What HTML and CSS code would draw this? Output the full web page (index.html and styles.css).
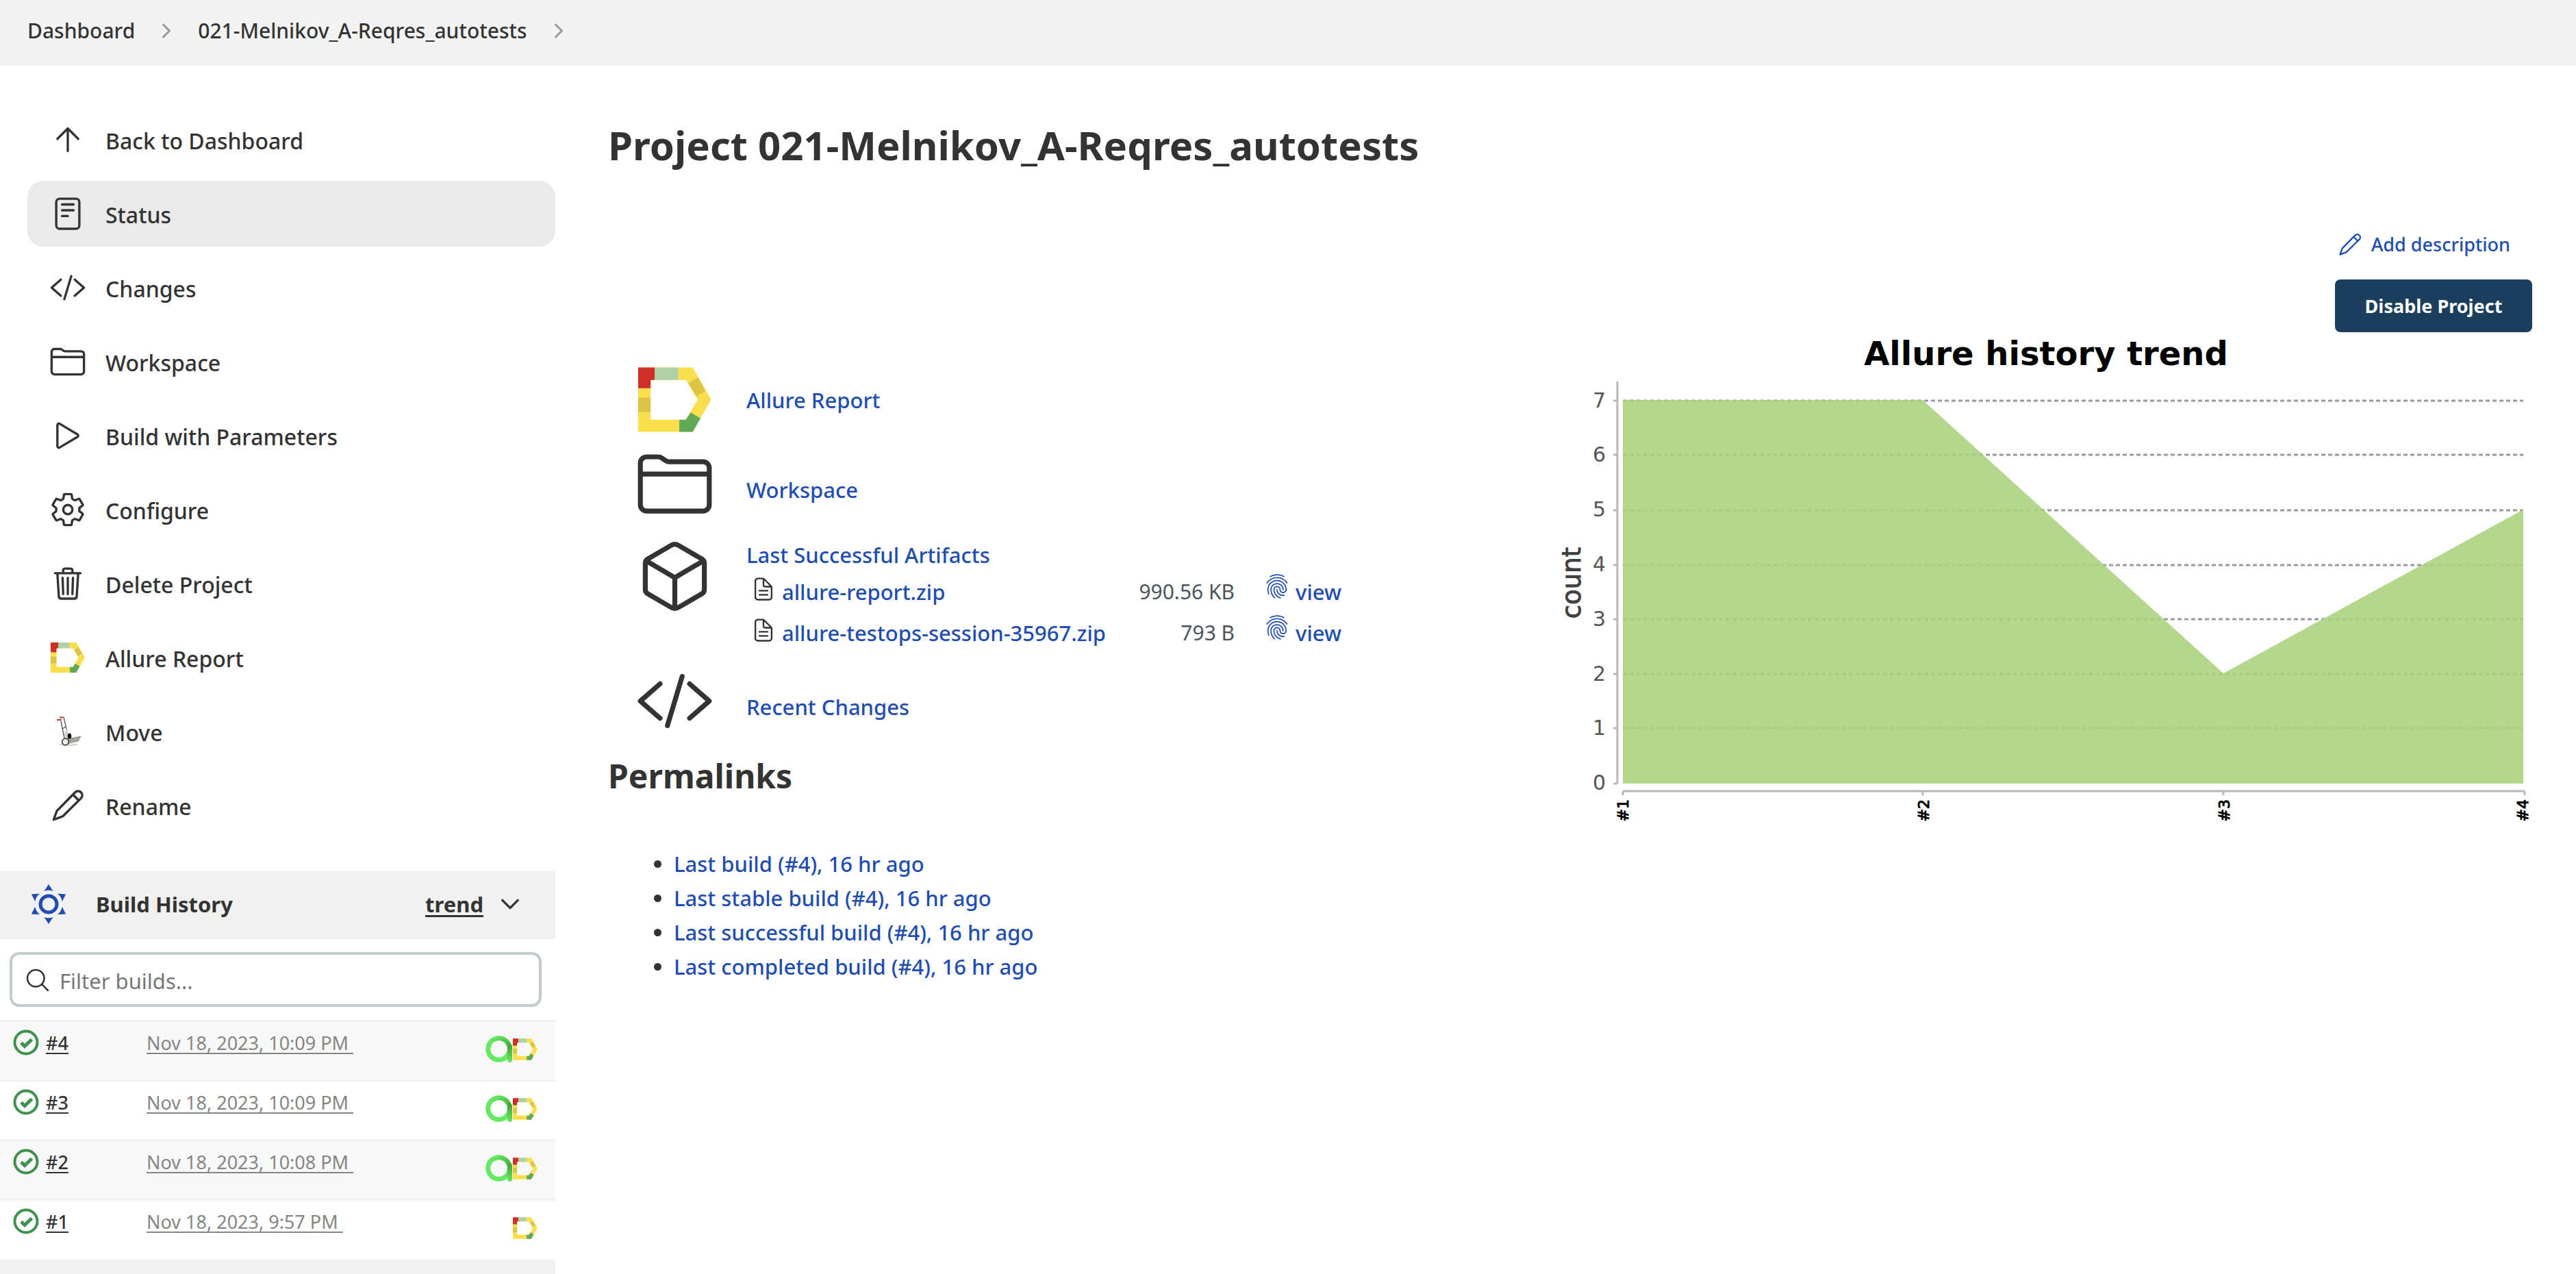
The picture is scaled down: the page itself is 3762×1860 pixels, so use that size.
FILE: index.html
```
<!DOCTYPE html>
<html lang="en">
<head>
<meta charset="utf-8">
<title>021-Melnikov_A-Reqres_autotests</title>
<link rel="stylesheet" href="styles.css">
</head>
<body>
<svg class="sprite" aria-hidden="true">
  <defs>
    <linearGradient id="stem-shade" x1="0" y1="0" x2="0" y2="1">
      <stop offset="0" stop-color="#3f9f3c"/><stop offset="1" stop-color="#68e862"/>
    </linearGradient>
    <linearGradient id="arc-shade" x1="0" y1="0" x2="1" y2="1">
      <stop offset="0" stop-color="#68e862"/><stop offset="1" stop-color="#43a53f"/>
    </linearGradient>
  </defs>
  <symbol id="chevron-right" viewBox="0 0 512 512"><path d="M184 112l144 144-144 144"/></symbol>
  <symbol id="chevron-down" viewBox="0 0 512 512"><path d="M112 184l144 144 144-144"/></symbol>
  <symbol id="arrow-up" viewBox="0 0 512 512"><path d="M112 244l144-144 144 144M256 120v292"/></symbol>
  <symbol id="reader" viewBox="0 0 512 512"><rect x="96" y="48" width="320" height="416" rx="48"/><path d="M176 128h160M176 208h160M176 288h80"/></symbol>
  <symbol id="code" viewBox="0 0 512 512"><path d="M160 368L32 256l128-112M352 368l128-112-128-112M304 96l-96 320"/></symbol>
  <symbol id="folder" viewBox="0 0 512 512"><path d="M440 432H72a40 40 0 01-40-40V120a40 40 0 0140-40h75.89a40 40 0 0122.19 6.72l27.84 18.56a40 40 0 0022.19 6.72H440a40 40 0 0140 40v240a40 40 0 01-40 40zM32 192h448"/></symbol>
  <symbol id="play" viewBox="0 0 512 512"><path d="M112 111v290c0 17.44 17 28.52 31 20.16l247.9-148.37c12.12-7.25 12.12-26.33 0-33.58L143 90.84c-14-8.36-31 2.72-31 20.16z"/></symbol>
  <symbol id="settings" viewBox="0 0 512 512"><path d="M262.29 192.31a64 64 0 1057.4 57.4 64.13 64.13 0 00-57.4-57.4zM416.39 256a154.34 154.34 0 01-1.53 20.79l45.21 35.46a10.81 10.81 0 012.45 13.75l-42.77 74a10.81 10.81 0 01-13.14 4.59l-44.9-18.08a16.11 16.11 0 00-15.17 1.75A164.48 164.48 0 01325 400.8a15.94 15.94 0 00-8.82 12.14l-6.73 47.89a11.08 11.08 0 01-10.68 9.17h-85.54a11.11 11.11 0 01-10.69-8.87l-6.72-47.82a16.07 16.07 0 00-9-12.22 155.3 155.3 0 01-21.46-12.57 16 16 0 00-15.11-1.71l-44.89 18.07a10.81 10.81 0 01-13.14-4.58l-42.77-74a10.8 10.8 0 012.45-13.75l38.21-30a16.05 16.05 0 006-14.08c-.36-4.17-.58-8.33-.58-12.5s.21-8.27.58-12.35a16 16 0 00-6.07-13.94l-38.19-30A10.81 10.81 0 0149.48 186l42.77-74a10.81 10.81 0 0113.14-4.59l44.9 18.08a16.11 16.11 0 0015.17-1.75A164.48 164.48 0 01187 111.2a15.94 15.94 0 008.82-12.14l6.73-47.89A11.08 11.08 0 01213.23 42h85.54a11.11 11.11 0 0110.69 8.87l6.72 47.82a16.07 16.07 0 009 12.22 155.3 155.3 0 0121.46 12.57 16 16 0 0015.11 1.71l44.89-18.07a10.81 10.81 0 0113.14 4.58l42.77 74a10.8 10.8 0 01-2.45 13.75l-38.21 30a16.05 16.05 0 00-6.05 14.08c.33 4.14.55 8.3.55 12.47z"/></symbol>
  <symbol id="trash" viewBox="0 0 512 512"><path d="M112 112l20 320c.95 18.49 14.4 32 32 32h184c17.67 0 30.87-13.51 32-32l20-320M80 112h352M192 112V72a24 24 0 0124-24h80a24 24 0 0124 24v40M256 176v224M184 176l8 224M328 176l-8 224"/></symbol>
  <symbol id="pencil" viewBox="0 0 512 512"><path d="M106 329L358 73a58 58 0 0182 82L184 407 60 452zM327 104l81 83"/></symbol>
  <symbol id="cube" viewBox="0 0 512 512"><path d="M448 341.37V170.61A32 32 0 00432.11 143l-152-88.46a47.94 47.94 0 00-48.24 0L79.89 143A32 32 0 0064 170.61v170.76A32 32 0 0079.89 369l152 88.46a48 48 0 0048.24 0l152-88.46A32 32 0 00448 341.37zM69 154l187 110 187-110M256 464V264"/></symbol>
  <symbol id="document" viewBox="0 0 512 512"><path d="M416 221.25V416a48 48 0 01-48 48H144a48 48 0 01-48-48V96a48 48 0 0148-48h98.75a32 32 0 0122.62 9.37l141.26 141.26a32 32 0 019.37 22.62zM256 56v120a32 32 0 0032 32h120M176 288h160M176 368h160"/></symbol>
  <symbol id="search" viewBox="0 0 512 512"><path d="M221.09 64a157.09 157.09 0 10157.09 157.09A157.1 157.1 0 00221.09 64zM338.29 338.29L448 448"/></symbol>
  <symbol id="fingerprint" viewBox="0 0 512 512"><path d="M390.42 75.28a10.45 10.45 0 01-5.32-1.44C340.72 50.08 302.35 40 256.35 40c-45.77 0-89.23 11.28-128.76 33.84C122 77 115.11 74.8 111.87 69a12.4 12.4 0 014.63-16.32A281.81 281.81 0 01256.35 16c49.23 0 92.23 11.28 139.39 36.48a12 12 0 014.85 16.08 11.3 11.3 0 01-10.17 6.72zm-330.79 126a11.73 11.73 0 01-6.7-2.16 12.26 12.26 0 01-2.78-16.8c22.89-33.6 52-60 86.69-78.48 72.58-38.84 165.51-39.12 238.32-.24 34.68 18.48 63.8 44.64 86.69 78a12.29 12.29 0 01-2.78 16.8 11.26 11.26 0 01-16.18-2.88c-20.8-30.24-47.15-54-78.36-70.56-66.34-35.28-151.18-35.28-217.29.24-31.44 16.8-57.79 40.8-78.59 71a10 10 0 01-9.02 5.08zM204.1 491a10.66 10.66 0 01-8.09-3.6C175.9 466.48 165 453 149.55 424c-16-29.52-24.27-65.52-24.27-104.16 0-71.28 58.71-129.36 130.84-129.36S387 248.56 387 319.84a11.56 11.56 0 11-23.11 0c0-58.08-48.32-105.36-107.72-105.36S148.4 261.76 148.4 319.84c0 34.56 7.39 66.48 21.49 92.4 14.8 27.6 25 39.36 42.77 58.08a12.67 12.67 0 010 17 12.44 12.44 0 01-8.56 3.68zm165.75-44.4c-27.51 0-51.78-7.2-71.66-21.36a129.1 129.1 0 01-55-105.36 11.57 11.57 0 1123.12 0 104.28 104.28 0 0044.84 85.44c16.41 11.52 35.6 17 58.72 17a147.41 147.41 0 0024-2.4c6.24-1.2 12.25 3.12 13.4 9.84a11.92 11.92 0 01-9.47 13.92 152.28 152.28 0 01-27.95 2.88zM323.38 496a13 13 0 01-3-.48c-36.76-10.56-60.8-24.72-86-50.4-32.37-33.36-50.16-77.76-50.16-125.28 0-38.88 31.9-70.56 71.19-70.56s71.2 31.68 71.2 70.56c0 25.68 21.5 46.56 48.08 46.56s48.08-20.88 48.08-46.56c0-90.48-75.13-163.92-167.59-163.92-65.65 0-125.75 37.92-152.79 96.72-9 19.44-13.64 42.24-13.64 67.2 0 18.72 1.61 48.24 15.48 86.64 2.32 6.24-.69 13.2-6.7 15.36a11.34 11.34 0 01-14.79-7 276.39 276.39 0 01-16.88-95c0-28.8 5.32-55 15.72-77.76 30.75-67 98.94-110.4 173.6-110.4 105.18 0 190.71 84.24 190.71 187.92 0 38.88-31.9 70.56-71.2 70.56s-71.2-31.68-71.2-70.56C303.5 293.92 282 273 255.42 273s-48.08 20.88-48.08 46.56c0 41 15.26 79.44 43.23 108.48 22 22.56 43 35 75.59 44.16 6.24 1.68 9.71 8.4 8.09 14.64a11.4 11.4 0 01-10.87 9.16z"/></symbol>
  <symbol id="allure" viewBox="0 0 106 93">
    <path fill="#f9df4c" fill-rule="evenodd" d="M0 0h79l26.5 46.5L79 93H0zM18 18v57.5h51l17-29L69 18z"/>
    <path fill="#d02f28" d="M0 0h24v18h-6v12H0z"/>
    <path fill="#afd1a9" d="M24 0h34v18H24z"/>
    <path fill="#dcc445" d="M0 43.500h18v21H0zM87 14.500l10.500 19.500L84 41.500l-11.500-19z"/>
    <path fill="#60a957" d="M59.500 75.500H69l7-10.500 14 8.500L79 93H59.500z"/>
  </symbol>
  <symbol id="testops" viewBox="0 0 40 40">
    <circle cx="19.500" cy="19.500" r="15.800" fill="none" stroke="#67e862" stroke-width="7"/>
    <path d="M11 6.500C20 .5 33 5 35.300 17" fill="none" stroke="url(#arc-shade)" stroke-width="6"/>
    <path d="M32 17q3.500-8 6.500-3l.5 3v18.500a3.500 3.500 0 01-7 0z" fill="url(#stem-shade)"/>
  </symbol>
  <symbol id="hand-truck" viewBox="0 0 54 54">
    <ellipse cx="28" cy="46" rx="14" ry="2.500" fill="#ddd"/>
    <path d="M17 12l5 25M21.500 8l5 22M19.500 23l4-3" fill="none" stroke="#555" stroke-width="1.300"/>
    <path d="M24.500 22l4 10v8h-6l-1-9z" fill="#d5d5d0"/>
    <ellipse cx="29.500" cy="34" rx="2.800" ry="4.500" fill="#111"/>
    <path d="M27 38l19-4-4 7-16 3z" fill="#a3a69f" stroke="#777" stroke-width=".8"/>
    <path d="M11 10h7M15 6.500h7" fill="none" stroke="#b8403c" stroke-width="2.200"/>
    <circle cx="23.500" cy="42" r="4.800" fill="#eee" stroke="#111" stroke-width="1.300"/>
  </symbol>
  <symbol id="weather" viewBox="0 0 60 60">
    <circle cx="30" cy="30" r="12" fill="none" stroke="#1f4db1" stroke-width="5"/>
    <g fill="#1f4db1">
      <path id="ray" d="M30 1l6.500 10Q30 8.500 23.500 11z"/>
      <use href="#ray" transform="rotate(60 30 30)"/><use href="#ray" transform="rotate(120 30 30)"/>
      <use href="#ray" transform="rotate(180 30 30)"/><use href="#ray" transform="rotate(240 30 30)"/>
      <use href="#ray" transform="rotate(300 30 30)"/>
    </g>
  </symbol>
  <symbol id="success" viewBox="0 0 38 38">
    <circle cx="19" cy="19" r="16.500" fill="none" stroke="#3f9150" stroke-width="4"/>
    <path d="M12 19.500l5 5L27.500 14.500" fill="none" stroke="#3f9150" stroke-width="5"/>
  </symbol>
</svg>

<nav class="breadcrumbs" aria-label="Breadcrumb">
  <a href="#">Dashboard</a>
  <svg class="icon crumb-sep"><use href="#chevron-right"/></svg>
  <a href="#">021-Melnikov_A-Reqres_autotests</a>
  <svg class="icon crumb-sep"><use href="#chevron-right"/></svg>
</nav>

<div class="page">
  <aside class="side">
    <nav class="tasks" aria-label="Project">
      <a class="task" href="#"><svg class="icon"><use href="#arrow-up"/></svg><span>Back to Dashboard</span></a>
      <a class="task active" href="#" aria-current="page"><svg class="icon"><use href="#reader"/></svg><span>Status</span></a>
      <a class="task" href="#"><svg class="icon"><use href="#code"/></svg><span>Changes</span></a>
      <a class="task" href="#"><svg class="icon"><use href="#folder"/></svg><span>Workspace</span></a>
      <a class="task" href="#"><svg class="icon"><use href="#play"/></svg><span>Build with Parameters</span></a>
      <a class="task" href="#"><svg class="icon"><use href="#settings"/></svg><span>Configure</span></a>
      <a class="task" href="#"><svg class="icon"><use href="#trash"/></svg><span>Delete Project</span></a>
      <a class="task" href="#"><svg class="logo"><use href="#allure"/></svg><span>Allure Report</span></a>
      <a class="task" href="#"><svg class="logo truck"><use href="#hand-truck"/></svg><span>Move</span></a>
      <a class="task" href="#"><svg class="icon"><use href="#pencil"/></svg><span>Rename</span></a>
    </nav>

    <section class="history">
      <header class="history-head">
        <svg class="history-icon"><use href="#weather"/></svg>
        <h2>Build History</h2>
        <a class="trend" href="#">trend</a>
        <button class="collapse" type="button" aria-label="Collapse"><svg class="icon"><use href="#chevron-down"/></svg></button>
      </header>
      <label class="filter">
        <svg class="icon"><use href="#search"/></svg>
        <input type="text" placeholder="Filter builds..." aria-label="Filter builds">
      </label>
      <table class="builds">
        <tr>
          <td class="build"><a href="#"><svg class="status"><use href="#success"/></svg></a><a class="num" href="#">#4</a></td>
          <td class="date"><a href="#">Nov 18, 2023, 10:09 PM&nbsp;</a></td>
          <td class="badges"><svg class="testops"><use href="#testops"/></svg><svg class="allure"><use href="#allure"/></svg></td>
        </tr>
        <tr>
          <td class="build"><a href="#"><svg class="status"><use href="#success"/></svg></a><a class="num" href="#">#3</a></td>
          <td class="date"><a href="#">Nov 18, 2023, 10:09 PM&nbsp;</a></td>
          <td class="badges"><svg class="testops"><use href="#testops"/></svg><svg class="allure"><use href="#allure"/></svg></td>
        </tr>
        <tr>
          <td class="build"><a href="#"><svg class="status"><use href="#success"/></svg></a><a class="num" href="#">#2</a></td>
          <td class="date"><a href="#">Nov 18, 2023, 10:08 PM&nbsp;</a></td>
          <td class="badges"><svg class="testops"><use href="#testops"/></svg><svg class="allure"><use href="#allure"/></svg></td>
        </tr>
        <tr>
          <td class="build"><a href="#"><svg class="status"><use href="#success"/></svg></a><a class="num" href="#">#1</a></td>
          <td class="date"><a href="#">Nov 18, 2023, 9:57 PM&nbsp;</a></td>
          <td class="badges"><svg class="allure"><use href="#allure"/></svg></td>
        </tr>
      </table>
      <div class="history-foot"></div>
    </section>
  </aside>

  <main class="main">
    <h1>Project 021-Melnikov_A-Reqres_autotests</h1>
    <div class="actions">
      <a class="describe" href="#"><svg class="icon"><use href="#pencil"/></svg>Add description</a>
      <button class="disable" type="button">Disable Project</button>
    </div>
    <div class="content">
      <div class="summary">
        <div class="item report"><svg class="logo"><use href="#allure"/></svg><a href="#">Allure Report</a></div>
        <div class="item workspace"><svg class="icon"><use href="#folder"/></svg><a class="single" href="#">Workspace</a></div>
        <div class="item artifacts">
          <svg class="icon"><use href="#cube"/></svg>
          <div>
            <a class="artifacts-title" href="#">Last Successful Artifacts</a>
            <table class="files">
              <tr>
                <td><a href="#"><svg class="icon"><use href="#document"/></svg>allure-report.zip</a></td>
                <td class="size">990.56 KB</td>
                <td><a href="#"><svg class="print"><use href="#fingerprint"/></svg>view</a></td>
              </tr>
              <tr>
                <td><a href="#"><svg class="icon"><use href="#document"/></svg>allure-testops-session-35967.zip</a></td>
                <td class="size">793 B</td>
                <td><a href="#"><svg class="print"><use href="#fingerprint"/></svg>view</a></td>
              </tr>
            </table>
          </div>
        </div>
        <div class="item"><svg class="icon"><use href="#code"/></svg><a class="single" href="#">Recent Changes</a></div>

        <h2>Permalinks</h2>
        <ul class="permalinks">
          <li><a href="#">Last build (#4), 16 hr ago</a></li>
          <li><a href="#">Last stable build (#4), 16 hr ago</a></li>
          <li><a href="#">Last successful build (#4), 16 hr ago</a></li>
          <li><a href="#">Last completed build (#4), 16 hr ago</a></li>
        </ul>
      </div>

      <svg class="chart" viewBox="0 0 1440 740" role="img" aria-label="Allure history trend">
        <text class="chart-title" x="730" y="48">Allure history trend</text>
        <g class="grid">
          <path d="M112 100H1427M112 179H1427M112 260H1427M112 340H1427M112 419H1427M112 499H1427M112 578H1427"/>
        </g>
        <path class="area" d="M112 99H550L989 498l438-239V659H112z"/>
        <path class="axis" d="M104 72V659M112 670H1429M98 100h6M98 179h6M98 260h6M98 340h6M98 419h6M98 499h6M98 578h6M98 659h6M112 670v6M550 670v6M989 670v6M1429 670v6"/>
        <g class="ticks">
          <text x="87" y="110">7</text><text x="87" y="189">6</text><text x="87" y="269">5</text><text x="87" y="349">4</text>
          <text x="87" y="429">3</text><text x="87" y="509">2</text><text x="87" y="588">1</text><text x="87" y="668">0</text>
        </g>
        <text class="y-label" transform="translate(50 366) rotate(-90)">count</text>
        <g class="builds-axis">
          <text transform="translate(120 682) rotate(-90)">#1</text><text transform="translate(559 682) rotate(-90)">#2</text>
          <text transform="translate(998 682) rotate(-90)">#3</text><text transform="translate(1434 682) rotate(-90)">#4</text>
        </g>
      </svg>
    </div>
  </main>
</div>
</body>
</html>
```
FILE: styles.css
```
* { box-sizing: border-box; }

body {
  margin: 0;
  background: #fff;
  color: #333;
  font: 500 31px/48px "Noto Sans", "Open Sans", sans-serif;
}

a { color: #1f4db1; text-decoration: none; }
h1, h2 { margin: 0; font-weight: 700; }
button { font-family: inherit; border: 0; cursor: pointer; }
svg { display: block; flex: none; }
.sprite { position: absolute; width: 0; height: 0; }

.icon {
  fill: none;
  stroke: currentColor;
  stroke-width: 32px;
  stroke-linecap: round;
  stroke-linejoin: round;
}

/* Breadcrumbs */
.breadcrumbs {
  display: flex;
  align-items: center;
  gap: 30px;
  height: 96px;
  padding: 0 40px 6px;
  background: #f3f3f3;
  font-size: 30px;
}
.breadcrumbs a { color: #333; }
.crumb-sep { width: 32px; height: 32px; color: #999; stroke-width: 48px; }

.page { display: flex; align-items: flex-start; }

/* Sidebar */
.side { flex: none; width: 811px; }
.tasks {
  display: flex;
  flex-direction: column;
  gap: 12px;
  padding: 60px 0 47px 40px;
}
.task {
  display: flex;
  align-items: center;
  gap: 28px;
  height: 96px;
  padding-left: 32px;
  border-radius: 24px;
  color: #333;
  font-size: 32px;
}
.task.active { background: #eaeaea; }
.task svg { width: 54px; height: 54px; }
.task span { padding-top: 3px; }
.task .logo { height: 44px; }
.task .truck { height: 54px; }

.history-head {
  display: flex;
  align-items: center;
  height: 100px;
  padding: 0 46px 2px 41px;
  background: #f1f1f1;
}
.history-head h2 { flex: 1; padding-left: 39px; font-size: 31px; line-height: 48px; }
.history-icon { width: 60px; height: 60px; }
.trend {
  color: #333;
  font-weight: 700;
  text-decoration: underline;
  text-decoration-skip-ink: none;
  text-decoration-thickness: 3px;
  text-underline-offset: 4px;
}
.collapse { margin-left: 19px; padding: 0; background: none; color: #333; }
.collapse svg { width: 40px; height: 40px; stroke-width: 44px; }

.filter {
  display: flex;
  align-items: center;
  gap: 12px;
  height: 80px;
  margin: 19px 20px 19px 14px;
  padding: 1px 20px 0 17px;
  border: 4px solid #c4cbcf;
  border-radius: 14px;
}
.filter svg { width: 40px; height: 40px; }
.filter input {
  flex: 1;
  min-width: 0;
  padding: 2px 0 0;
  border: 0;
  outline: 0;
  background: none;
  color: #333;
  font: 400 31px/48px "Noto Sans", "Open Sans", sans-serif;
}
.filter input::placeholder { color: #777; opacity: 1; }

.builds { width: 100%; border-collapse: collapse; font-size: 27px; line-height: 40px; }
.builds tr { height: 87px; border-top: 3px solid #f1f1f1; }
.builds tr:nth-child(odd) { background: #f8f8f8; }
.builds td { padding: 11px 0 0; vertical-align: top; }
.builds .build { width: 214px; padding-left: 18px; }
.build a { display: inline-block; vertical-align: top; }
.build .status { width: 40px; height: 38px; }
.num { padding-left: 9px; color: #333; text-decoration: underline; text-decoration-thickness: 2px; text-underline-offset: 4px; }
.date a { color: #858585; font-weight: 400; text-decoration: underline; text-decoration-thickness: 2px; text-underline-offset: 4px; }
.builds .badges { display: flex; justify-content: flex-end; align-items: center; padding: 20px 26px 0 0; }
.testops { width: 40px; height: 40px; }
.allure { width: 36px; height: 40px; }
.history-foot { height: 24px; background: #f1f1f1; }

/* Main panel */
.main { flex: 1; min-width: 0; padding: 76px 64px 0 77px; }
h1 { font-size: 58px; line-height: 80px; }
.actions {
  display: flex;
  flex-direction: column;
  align-items: flex-end;
  gap: 27px;
  padding-top: 81px;
}
.describe { display: flex; align-items: center; gap: 12px; padding-right: 32px; font-size: 27px; }
.describe svg { width: 38px; height: 38px; }
.disable {
  width: 288px;
  height: 77px;
  border-radius: 8px;
  background: #1b3e5d;
  color: #fff;
  font-size: 27px;
  font-weight: 700;
}

.content { display: flex; align-items: flex-start; justify-content: space-between; }
.summary { padding-top: 41px; }
.item { display: flex; align-items: flex-start; gap: 47px; padding-left: 40px; }
.item > svg { width: 115px; height: 115px; color: #333; }
.item > .logo { padding: 0 4px; }
.item.report { align-items: center; margin-bottom: 8px; }
.workspace { margin-bottom: 20px; }
.artifacts { margin-bottom: 12px; }
.single { padding-top: 42px; }
.artifacts-title { display: block; padding-top: 2px; }

.files { border-collapse: collapse; }
.files tr { height: 60px; }
.files td { padding: 0 0 0 6px; }
.files a { display: flex; align-items: center; gap: 8px; }
.files .icon { width: 38px; height: 38px; margin-bottom: 8px; color: #333; }
.files .print { width: 38px; height: 38px; margin-bottom: 16px; fill: currentColor; }
.files .size { width: 188px; color: #4d545d; font-size: 30px; font-weight: 400; text-align: right; }
.files td:last-child { padding-left: 43px; }

.summary h2 { padding-top: 20px; font-size: 48px; line-height: 64px; }
.permalinks { margin: 0; padding: 71px 0 0 96px; line-height: 50px; }

.chart { flex: 0 1 1440px; min-width: 0; height: auto; }
.chart text { font-family: "DejaVu Sans", sans-serif; font-weight: 400; }
.chart .chart-title { fill: #000; font-size: 48px; font-weight: 700; text-anchor: middle; }
.grid { fill: none; stroke: #999; stroke-width: 3px; stroke-dasharray: 6px 4px; }
.area { fill: #aad27d; fill-opacity: .88; }
.axis { fill: none; stroke: #b8b8b8; stroke-width: 3px; }
.ticks { fill: #555; font-size: 30px; text-anchor: end; }
.y-label { fill: #404040; stroke: #404040; stroke-width: 1px; font-size: 37px; text-anchor: middle; }
.builds-axis { fill: #000; stroke: #000; stroke-width: 1px; font-size: 22px; text-anchor: end; }
```
